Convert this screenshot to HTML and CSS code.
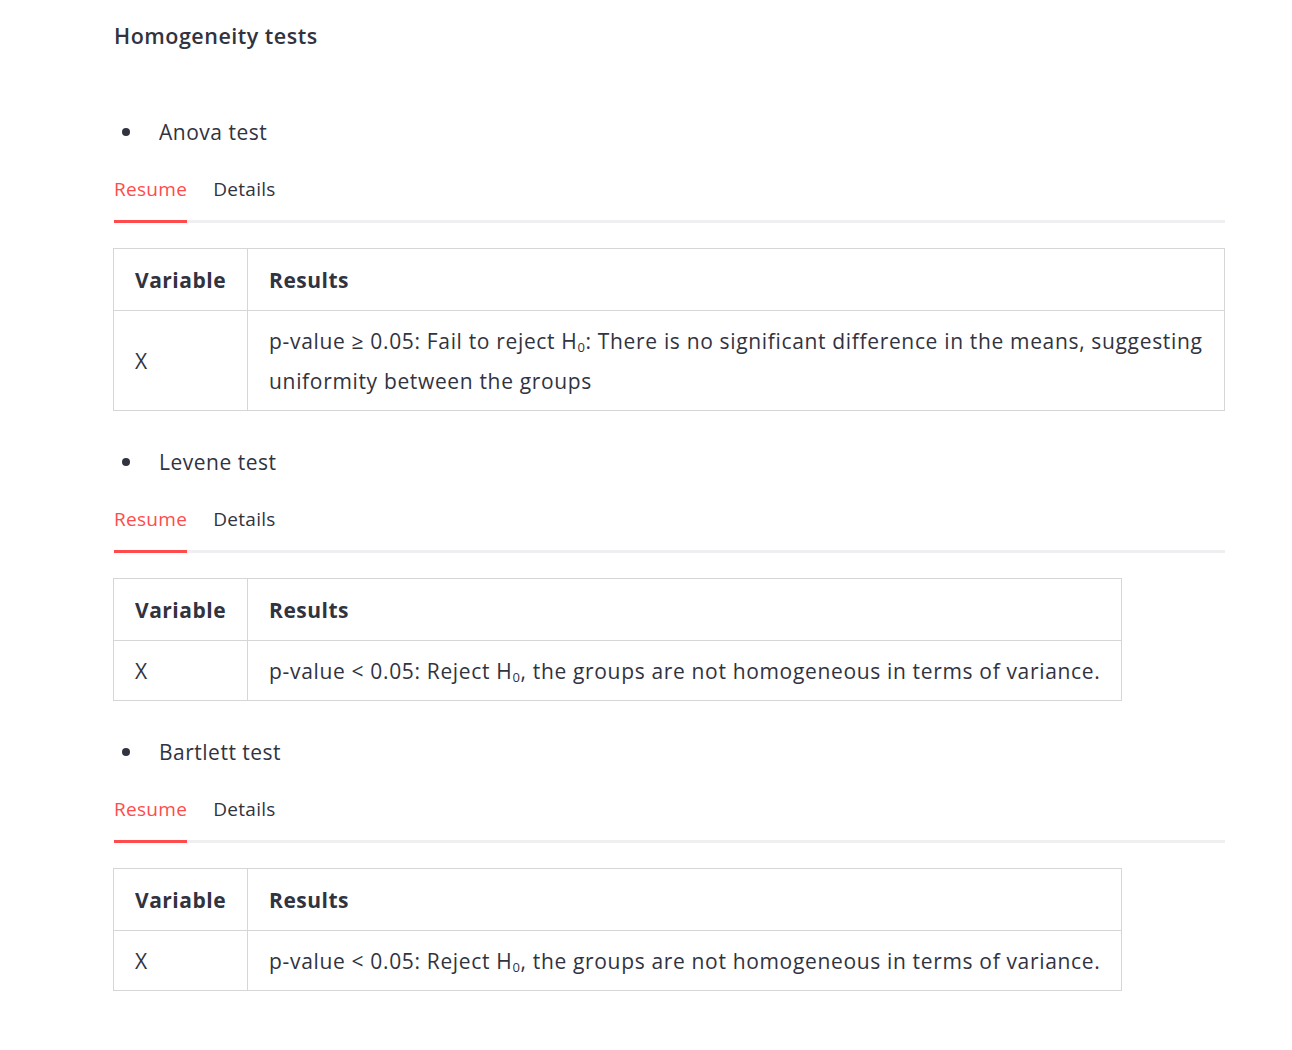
FILE: index.html
```html
<!DOCTYPE html>
<html lang="en">
<head>
<meta charset="utf-8">
<title>Homogeneity tests</title>
<link rel="stylesheet" href="styles.css">
</head>
<body>
<main class="page">
  <h4 class="title">Homogeneity tests</h4>

  <section class="test">
    <ul class="bullets"><li>Anova test</li></ul>
    <div class="tabs">
      <span class="tab active">Resume</span>
      <span class="tab">Details</span>
    </div>
    <table class="results">
      <thead><tr><th>Variable</th><th>Results</th></tr></thead>
      <tbody><tr><td>X</td><td>p-value ≥ 0.05: Fail to reject H<sub>0</sub>: There is no significant difference in the means, suggesting uniformity between the groups</td></tr></tbody>
    </table>
  </section>

  <section class="test">
    <ul class="bullets"><li>Levene test</li></ul>
    <div class="tabs">
      <span class="tab active">Resume</span>
      <span class="tab">Details</span>
    </div>
    <table class="results">
      <thead><tr><th>Variable</th><th>Results</th></tr></thead>
      <tbody><tr><td>X</td><td>p-value &lt; 0.05: Reject H<sub>0</sub>, the groups are not homogeneous in terms of variance.</td></tr></tbody>
    </table>
  </section>

  <section class="test">
    <ul class="bullets"><li>Bartlett test</li></ul>
    <div class="tabs">
      <span class="tab active">Resume</span>
      <span class="tab">Details</span>
    </div>
    <table class="results">
      <thead><tr><th>Variable</th><th>Results</th></tr></thead>
      <tbody><tr><td>X</td><td>p-value &lt; 0.05: Reject H<sub>0</sub>, the groups are not homogeneous in terms of variance.</td></tr></tbody>
    </table>
  </section>
</main>
</body>
</html>
```
FILE: styles.css
```css
html, body {
  margin: 0;
  padding: 0;
  background: #ffffff;
}
body {
  font-family: "Open Sans", "Noto Sans", sans-serif;
  color: #31333f;
  font-size: 20px;
}
.page {
  width: 1111px;
  margin-left: 114px;
  padding-top: 21px;
  padding-bottom: 40px;
}
.title {
  margin: 0;
  font-size: 21.5px;
  letter-spacing: 0.5px;
  line-height: 30px;
  font-weight: 600;
}
.test {
  margin-top: 31px;
}
.title + .test {
  margin-top: 61px;
}
.bullets {
  list-style: none;
  margin: 0;
  padding: 0;
}
.bullets li {
  display: flex;
  align-items: center;
  line-height: 40px;
  font-size: 21px;
  letter-spacing: 0.5px;
}
.bullets li::before {
  content: "";
  width: 8px;
  height: 8px;
  border-radius: 50%;
  background: #31333f;
  margin-left: 8px;
  margin-right: 29px;
}
.tabs {
  display: flex;
  gap: 26px;
  border-bottom: 3px solid #efeff1;
}
.tab {
  font-size: 19px;
  letter-spacing: 0.3px;
  line-height: 24px;
  padding: 25px 0 19px;
  margin-bottom: -3px;
  border-bottom: 3px solid transparent;
}
.tab.active {
  color: #ff4b4b;
  border-bottom-color: #ff4b4b;
}
.results {
  margin-top: 25px;
  margin-left: -1px;
  border-collapse: collapse;
  border: 1px solid #d6d6d9;
  font-size: 21px;
  letter-spacing: 0.66px;
}
.results th,
.results td {
  border: 1px solid #d6d6d9;
  padding: 10px 21px 9px;
  line-height: 40px;
  text-align: left;
  vertical-align: middle;
}
.results th {
  font-weight: 700;
  letter-spacing: 0.5px;
  padding-top: 11px;
  padding-bottom: 10px;
}
.results sub {
  font-size: 0.62em;
  line-height: 1;
  vertical-align: -0.2em;
}
```
